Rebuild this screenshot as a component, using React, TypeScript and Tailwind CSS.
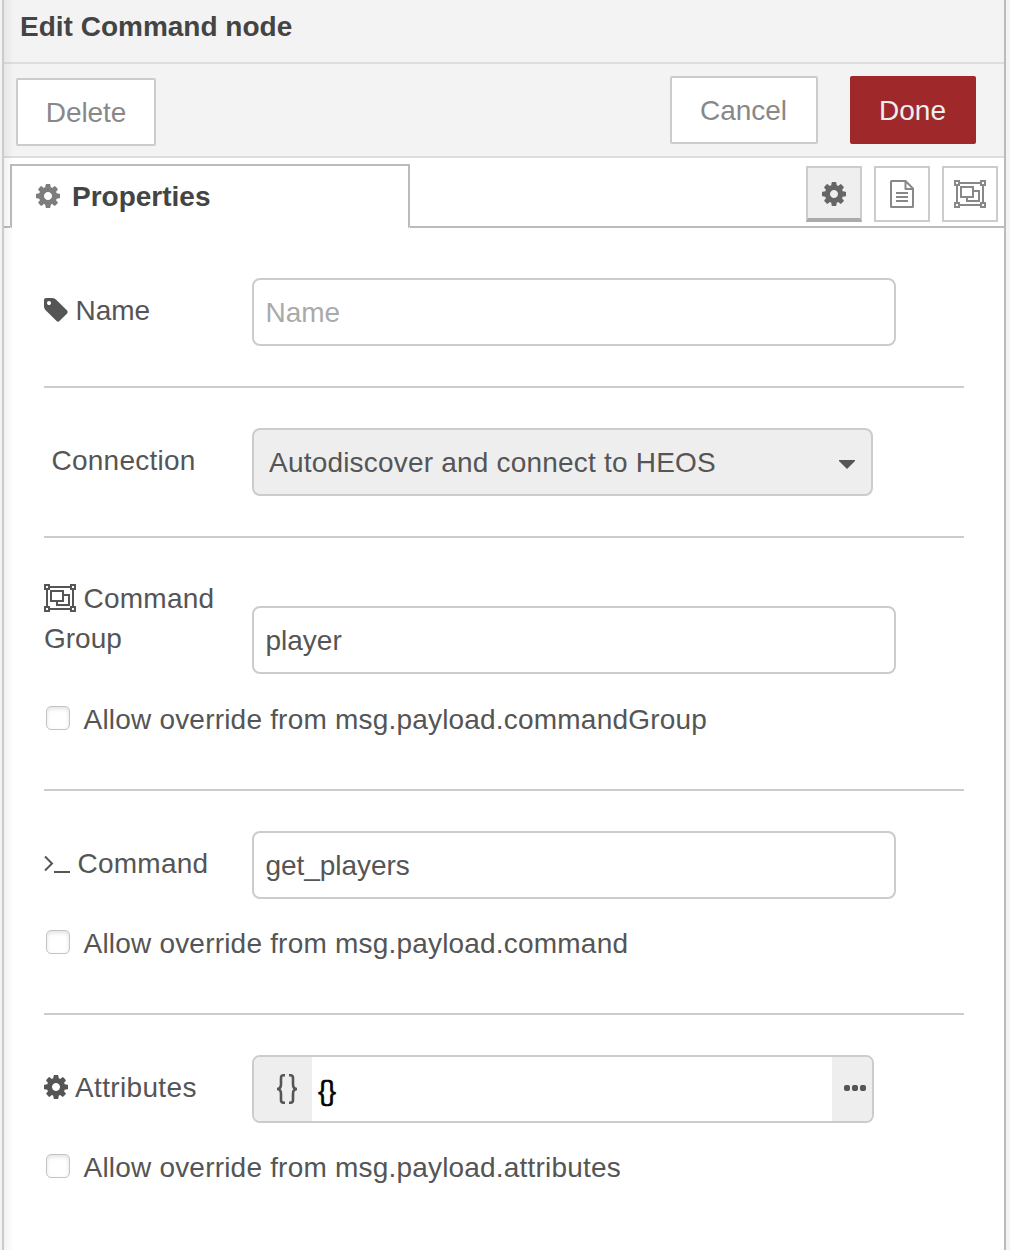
import type { ReactNode } from "react";

function Cog({ className = "" }: { className?: string }) {
  return (
    <svg viewBox="0 128 1536 1536" className={`h-6 w-6 shrink-0 fill-current ${className}`}>
      <path d="M1024 896q0-106-75-181t-181-75-181 75-75 181 75 181 181 75 181-75 75-181zm512-109v222q0 12-8 23t-20 13l-185 28q-19 54-39 91 35 50 107 138 10 12 10 25t-9 23q-27 37-99 108t-94 71q-12 0-26-9l-138-108q-44 23-91 38-16 136-29 186-7 28-36 28h-222q-14 0-24.5-8.5t-11.5-21.5l-28-184q-49-16-90-37l-141 107q-10 9-25 9-14 0-25-11-126-114-165-168-7-10-7-23 0-12 8-23 15-21 51-66.5t54-70.5q-27-50-41-99l-183-27q-13-2-21-12.5t-8-23.5v-222q0-12 8-23t19-13l186-28q14-46 39-92-40-57-107-138-10-12-10-24 0-10 9-23 26-36 98.5-107.5t94.5-71.5q13 0 26 10l138 107q44-23 91-38 16-136 29-186 7-28 36-28h222q14 0 24.5 8.5t11.5 21.5l28 184q49 16 90 37l142-107q9-9 24-9 13 0 25 10 129 119 165 170 7 8 7 22 0 12-8 23-15 21-51 66.5t-54 70.5q26 50 41 98l183 28q13 2 21 12.5t8 23.5z" />
    </svg>
  );
}

function Tag() {
  return (
    <svg viewBox="0 128 1536 1536" className="h-6 w-6 shrink-0 fill-current">
      <path d="M448 448q0-53-37.5-90.5t-90.5-37.5-90.5 37.5-37.5 90.5 37.5 90.5 90.5 37.5 90.5-37.5 37.5-90.5zm1067 576q0 53-37 90l-491 492q-39 37-91 37-53 0-90-37l-715-716q-38-37-64.5-101t-26.5-117v-416q0-52 38-90t90-38h416q53 0 117 26.5t102 64.5l715 714q37 39 37 91z" />
    </svg>
  );
}

function ObjectGroup() {
  return (
    <svg viewBox="0 0 32 28" className="h-7 w-8 shrink-0" fill="none" stroke="currentColor" strokeWidth="2">
      <path d="M1 1h4v4H1zM27 1h4v4h-4zM1 23h4v4H1zM27 23h4v4h-4z" />
      <path d="M6 3H26M6 25H26M3 6V22M29 6V22" />
      <path d="M7 7H19V17H7zM20 11H25V21H13V18" />
    </svg>
  );
}

function FileText() {
  return (
    <svg viewBox="0 0 24 28" className="h-7 w-6" fill="none" stroke="currentColor" strokeWidth="2" strokeLinejoin="round">
      <path d="M1.5 1H15.5L23 8.5V26.5a.5.5 0 0 1-.5.5H1.5a.5.5 0 0 1-.5-.5V1.5a.5.5 0 0 1 .5-.5zM15.5 1V9H23" />
      <path d="M6 13H18M6 17H18M6 21H18" />
    </svg>
  );
}

function Terminal() {
  return (
    <svg viewBox="0 0 26 18" className="mt-0.5 h-[18px] w-[26px] shrink-0" fill="none" stroke="currentColor" strokeWidth="2">
      <path d="M1 1.5L8 8.5L1 15.5M10 17H26" />
    </svg>
  );
}

function Rule() {
  return <div className="h-0.5 w-[920px] shrink-0 bg-[#ccc]" />;
}

function Field({ children, className = "" }: { children: ReactNode; className?: string }) {
  return (
    <div className={`flex h-[68px] shrink-0 rounded-lg border-2 border-[#ccc] ${className}`}>{children}</div>
  );
}

function Override({ children }: { children: ReactNode }) {
  return (
    <label className="flex h-6 items-center pl-0.5">
      <span className="h-6 w-6 shrink-0 rounded-[5px] border border-[#c4c4c4] bg-white shadow-[inset_0_2px_4px_rgba(0,0,0,0.12)]" />
      <span className="ml-[13.5px] mt-[3px] whitespace-nowrap tracking-[0.2px]">{children}</span>
    </label>
  );
}

export default function App() {
  return (
    <div className="flex h-[1250px] w-[1010px] overflow-hidden bg-[#f3f3f3] font-['Liberation_Sans',Arial,sans-serif] text-[28px] leading-10 text-[#555]">
      <div className="relative ml-0.5 flex w-[1004px] flex-col border-l-2 border-r-2 border-l-[#ccc] border-r-[#bbb] bg-white">
        <div className="pointer-events-none absolute inset-y-0 left-0 w-2.5 bg-linear-to-r from-black/5 to-transparent" />
        <header className="flex h-16 shrink-0 items-start border-b-2 border-[#ddd] bg-[#f3f3f3] pl-4 pt-[7px] font-bold text-[#444]">
          <span className="whitespace-nowrap">Edit Command node</span>
        </header>
        <div className="flex h-[94px] shrink-0 items-start border-b-2 border-[#ddd] bg-[#f3f3f3] pl-3 pr-7 pt-3 text-[#888]">
          <button className="mt-0.5 h-[68px] w-[140px] rounded-[2px] border-2 border-[#ccc] bg-white pt-0.5 tracking-[-0.1px]">Delete</button>
          <button className="ml-auto h-[68px] w-[148px] rounded-[2px] border-2 border-[#ccc] bg-white pr-px pt-0.5">Cancel</button>
          <button className="ml-8 h-[68px] w-[126px] rounded-[2px] bg-[#9f282b] pr-px pt-0.5 text-[#eee]">Done</button>
        </div>
        <nav className="flex h-[70px] shrink-0 pt-1.5">
          <div className="mt-auto h-0.5 w-1.5 bg-[#bbb]" />
          <div className="flex w-[400px] items-center rounded-b-[2px] border-x-2 border-t-2 border-[#bbb] pl-6 font-bold text-[#444]">
            <Cog className="mb-0.5 text-[#7d7d7d]" />
            <span className="ml-3">Properties</span>
          </div>
          <div className="flex grow justify-end gap-3 border-b-2 border-[#bbb] pr-1.5 pt-0.5 text-[#888]">
            <button className="flex h-14 w-14 items-center justify-center border-2 border-b-4 border-[#ccc] border-b-[#aaa] bg-[#efefef] pr-px pt-0.5 text-[#666]"><Cog /></button>
            <button className="flex h-14 w-14 items-center justify-center border-2 border-[#ccc] pr-px"><FileText /></button>
            <button className="flex h-14 w-14 items-center justify-center border-2 border-[#ccc] pr-px"><ObjectGroup /></button>
          </div>
        </nav>
        <main className="flex flex-col pl-10 pt-[50px]">
          <section className="flex h-[108px]">
            <label className="flex h-16 w-[208px] items-center gap-[7.5px]"><Tag /><span className="mt-0.5">Name</span></label>
            <Field className="w-[644px] items-center pl-[11.5px] pt-0.5 text-[#aaa]">Name</Field>
          </section>
          <Rule />
          <section className="flex h-[148px] pt-10">
            <label className="flex h-16 w-[208px] items-center pl-[7.5px] pt-0.5 tracking-[0.25px]">Connection</label>
            <Field className="w-[621px] items-center justify-between bg-[#eee] pl-[15px] pr-4">
              <span className="mt-0.5 tracking-[0.2px]">Autodiscover and connect to HEOS</span>
              <svg viewBox="0 0 16 9" className="mt-1 h-[9px] w-4 fill-current"><path d="M0 0H16V1L8 9L0 1z" /></svg>
            </Field>
          </section>
          <Rule />
          <section className="flex h-[251px] flex-col pt-10">
            <div className="flex">
              <label className="w-[208px] pt-px tracking-[0.25px]">
                <span className="flex items-center gap-[7.5px]"><span className="-mt-0.5"><ObjectGroup /></span>Command</span>
                <span className="block tracking-normal">Group</span>
              </label>
              <Field className="mt-7 w-[644px] items-center pl-[11.5px] pt-0.5">player</Field>
            </div>
            <div className="mt-8"><Override>Allow override from msg.payload.commandGroup</Override></div>
          </section>
          <Rule />
          <section className="flex h-[222px] flex-col pt-10">
            <div className="flex">
              <label className="flex h-16 w-[208px] items-center gap-[7.5px]"><Terminal /><span className="mt-0.5 tracking-[0.25px]">Command</span></label>
              <Field className="w-[644px] items-center pl-[11.5px] pt-0.5 tracking-[-0.05px]">get_players</Field>
            </div>
            <div className="mt-[31px]"><Override>Allow override from msg.payload.command</Override></div>
          </section>
          <Rule />
          <section className="flex flex-col pt-10">
            <div className="flex">
              <label className="flex h-16 w-[208px] items-center gap-[7px]"><Cog /><span className="mt-0.5 tracking-[0.35px]">Attributes</span></label>
              <Field className="w-[622px] overflow-hidden">
                <span className="flex w-[58px] items-center justify-end bg-[#eee] pr-3.5">
                  <svg viewBox="0 0 22 32" className="h-8 w-[22px]" fill="none" stroke="currentColor" strokeWidth="2.6"><path d="M9 2.3H7.5Q5 2.3 5 5V11Q5 16 1 16Q5 16 5 21V27Q5 29.7 7.5 29.7H9M13 2.3H14.5Q17 2.3 17 5V11Q17 16 21 16Q17 16 17 21V27Q17 29.7 14.5 29.7H13" /></svg>
                </span>
                <span className="flex grow items-center pl-1.5 pt-[3px] tracking-[-0.5px] text-black [-webkit-text-stroke:0.5px_black]">{"{}"}</span>
                <span className="flex w-10 items-center justify-end gap-0.5 bg-[#eee] pb-0.5 pr-1.5">
                  <i className="h-1.5 w-1.5 rounded-[2px] bg-[#555]" /><i className="h-1.5 w-1.5 rounded-[2px] bg-[#555]" /><i className="h-1.5 w-1.5 rounded-[2px] bg-[#555]" />
                </span>
              </Field>
            </div>
            <div className="mt-[31px]"><Override>Allow override from msg.payload.attributes</Override></div>
          </section>
        </main>
      </div>
    </div>
  );
}
